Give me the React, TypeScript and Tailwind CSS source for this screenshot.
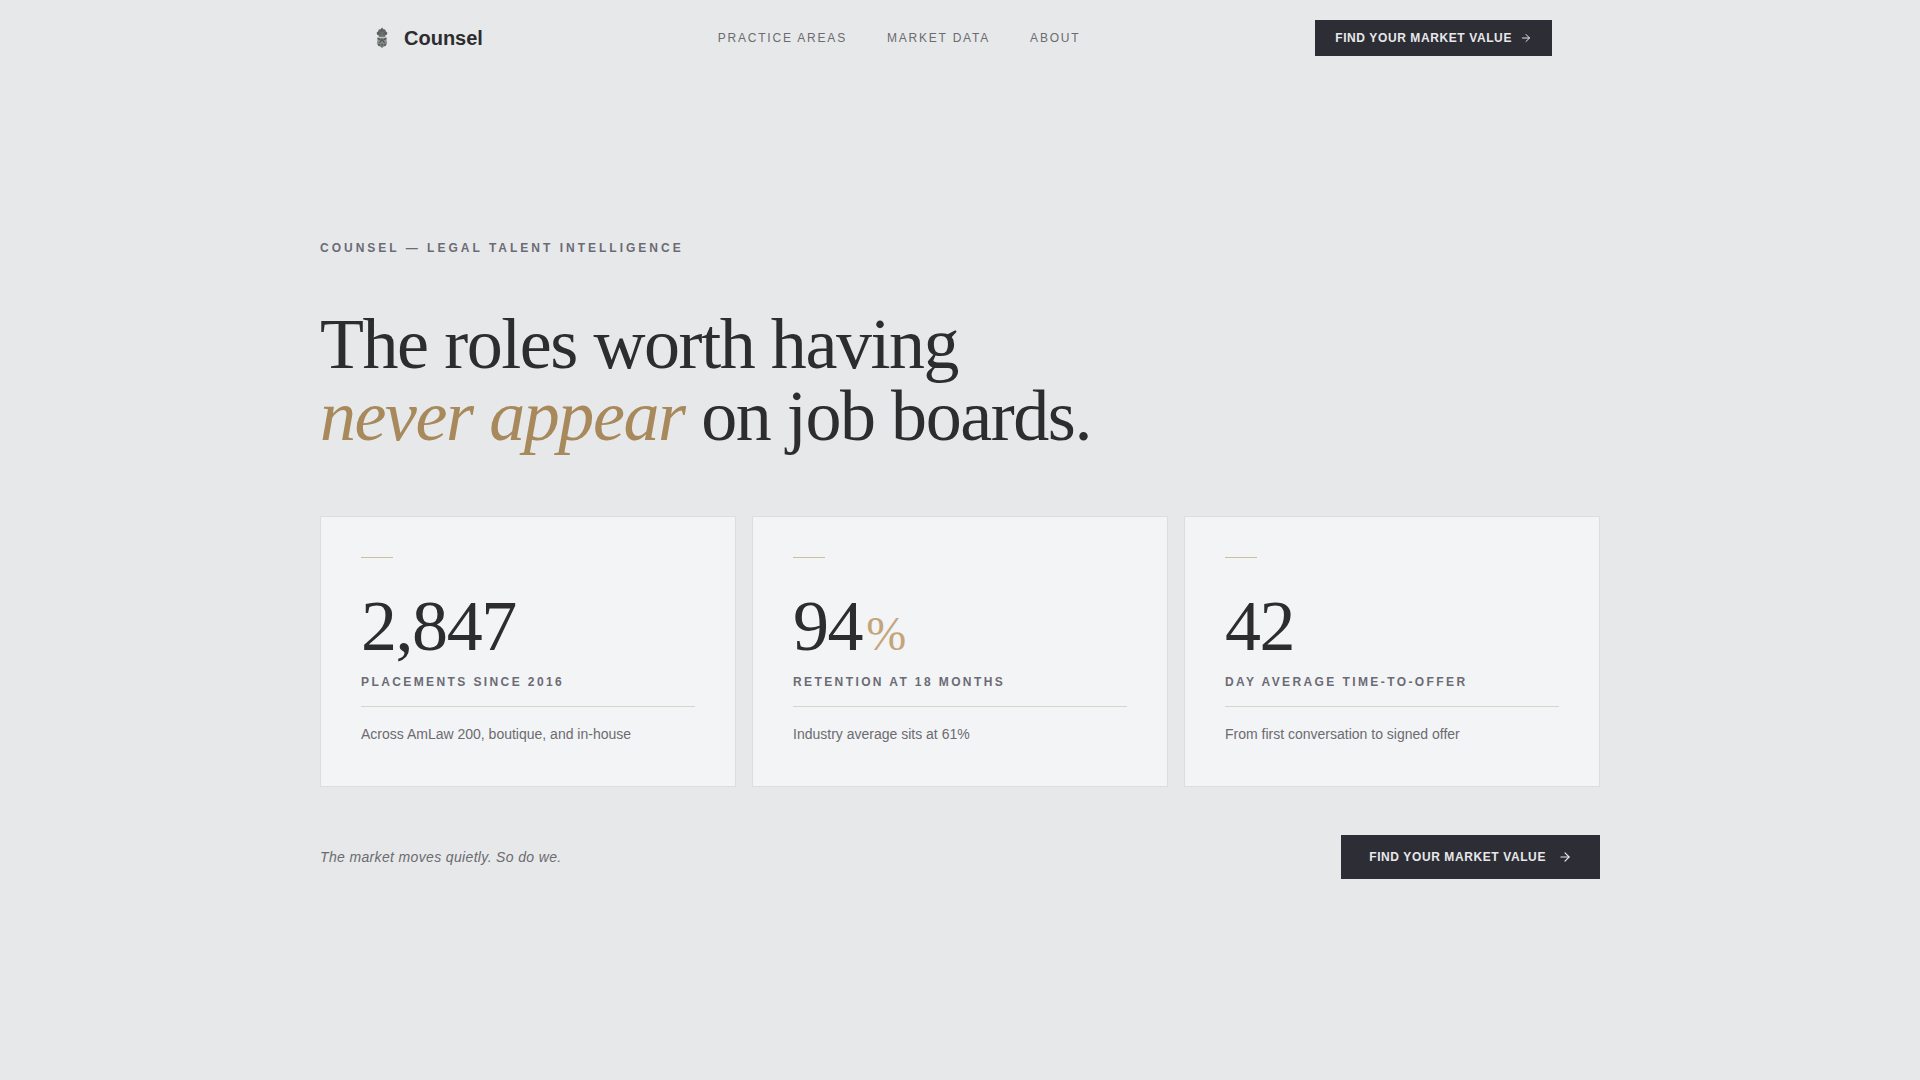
import { ArrowRight } from "lucide-react";

type Stat = {
  value: string;
  unit?: string;
  label: string;
  detail: string;
};

const links = [
  { label: "Practice Areas", href: "#practice-areas" },
  { label: "Market Data", href: "#market-data" },
  { label: "About", href: "#about" },
];

const stats: Stat[] = [
  {
    value: "2,847",
    label: "Placements since 2016",
    detail: "Across AmLaw 200, boutique, and in-house",
  },
  {
    value: "94",
    unit: "%",
    label: "Retention at 18 months",
    detail: "Industry average sits at 61%",
  },
  {
    value: "42",
    label: "Day average time-to-offer",
    detail: "From first conversation to signed offer",
  },
];

function Crest() {
  return (
    <svg viewBox="0 0 28 28" className="h-7 w-7" aria-hidden="true">
      <path
        d="M14 3.5l1.4 1.8 1.8.2.6 1.8 1.6 1.5-.6 2-1.6.6.2 1.4h-6.8l.2-1.4-1.6-.6-.6-2 1.6-1.5.6-1.8 1.8-.2z"
        fill="#5d615f"
      />
      <path
        d="M9 13.6h10l-.4 3 .6 2.6-1.6 2.8-2 .8L14 24.2l-1.6-1.4-2-.8-1.6-2.8.6-2.6z"
        fill="#8b8f8d"
      />
      <path
        d="M10 14.4l2.4 1.4M18 14.4l-2.4 1.4M11.4 19l2.6-3.6 2.6 3.6M10 20.6l2.4.6M18 20.6l-2.4.6M14 19.6v3"
        fill="none"
        stroke="#4b4f4d"
        strokeWidth="1.2"
      />
      <path d="M12 7.4l2 2.4 2-2.4M11 11h6" fill="none" stroke="#7f8381" strokeWidth="0.8" />
    </svg>
  );
}

export default function App() {
  return (
    <div className="min-h-screen bg-[#e7e8ea] font-['Liberation_Sans',sans-serif] text-[#2d2d30]">
      <header>
        <div className="mx-auto flex max-w-7xl items-center justify-between px-12 py-5">
          <a href="#" className="flex items-center gap-2">
            <Crest />
            <span className="text-xl font-bold leading-7">Counsel</span>
          </a>

          <nav className="flex items-center gap-10">
            {links.map((link) => (
              <a
                key={link.label}
                href={link.href}
                className="text-xs uppercase tracking-[0.15em] text-[#6b6b70]"
              >
                {link.label}
              </a>
            ))}
          </nav>

          <button
            type="button"
            className="flex h-9 items-center gap-2 bg-[#2d2d35] px-5 text-xs font-bold uppercase tracking-wider text-[#e7e8ea]"
          >
            Find your market value
            <ArrowRight size={12} />
          </button>
        </div>
      </header>

      <main className="mx-auto max-w-7xl pt-41 pb-24">
        <p className="text-xs font-bold uppercase tracking-[0.25em] text-[#6b6b75]">
          Counsel — Legal Talent Intelligence
        </p>

        <h1 className="mt-13 font-['Liberation_Serif',serif] text-7xl leading-none tracking-[-0.02em]">
          The roles worth having
          <br />
          <em className="text-[#a8895c]">never appear</em> on job boards.
        </h1>

        <div className="mt-16 grid grid-cols-1 gap-4 md:grid-cols-3">
          {stats.map((stat) => (
            <article key={stat.label} className="border border-[#dcdddf] bg-[#f3f4f6] p-10">
              <div className="h-px w-8 bg-[#d0bda2]" />
              <p className="mt-8 font-['Liberation_Serif',serif] text-7xl leading-none tracking-[-0.02em]">
                {stat.value}
                {stat.unit ? (
                  <span className="ml-1 text-5xl leading-none text-[#c4a57a]">{stat.unit}</span>
                ) : null}
              </p>
              <p className="mt-3 text-xs font-bold uppercase tracking-[0.2em] text-[#6b6b75]">
                {stat.label}
              </p>
              <p className="mt-4 border-t border-[#d9d5c8] pt-4 text-sm leading-relaxed text-[#6b6b70]">
                {stat.detail}
              </p>
            </article>
          ))}
        </div>

        <div className="mt-12 flex items-center justify-between">
          <p className="text-sm italic tracking-wide text-[#6b6b70]">
            The market moves quietly. So do we.
          </p>
          <button
            type="button"
            className="flex h-11 items-center gap-3 bg-[#2d2d35] px-7 text-xs font-bold uppercase tracking-wider text-[#e7e8ea]"
          >
            Find your market value
            <ArrowRight size={14} />
          </button>
        </div>
      </main>
    </div>
  );
}
